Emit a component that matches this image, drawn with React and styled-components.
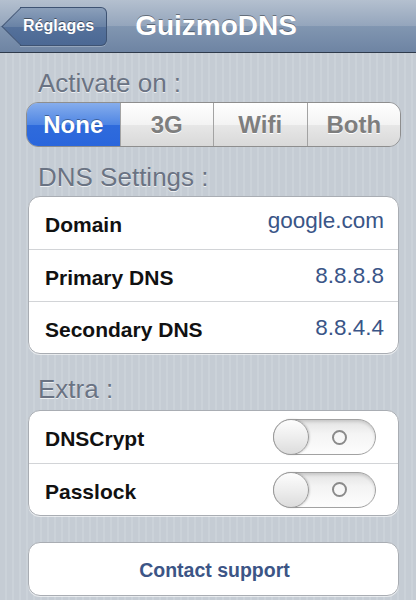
import React from 'react'
import styled, { createGlobalStyle } from 'styled-components'

const Global = createGlobalStyle`
  html, body {
    margin: 0;
    padding: 0;
  }
  body {
    font-family: 'Liberation Sans', Arial, Helvetica, sans-serif;
    background: repeating-linear-gradient(90deg, #c5ccd4 0px, #c5ccd4 5px, #cbd2d9 5px, #cbd2d9 7px);
    min-height: 600px;
  }
`

const Screen = styled.div`
  width: 416px;
  min-height: 600px;
`

const NavBar = styled.div`
  height: 52px;
  border-bottom: 1px solid #2f3b4c;
  background: linear-gradient(#b4c0cf 0%, #94a5bc 50%, #8196b1 51%, #6e84a3 100%);
  display: flex;
  align-items: center;
  padding-left: 7px;
  box-sizing: content-box;
`

const BackButton = styled.div`
  position: relative;
  height: 37px;
  margin-left: 13px;
  padding: 0 12px 0 3px;
  display: flex;
  align-items: center;
  border: 1px solid #3e5373;
  border-left: none;
  border-radius: 0 6px 6px 0;
  background: linear-gradient(#8b9fba 0%, #6a83a6 50%, #55719b 51%, #4b6894 100%);
  box-shadow: 0 1px 0 rgba(255, 255, 255, 0.25);
  color: #fff;
  font-weight: bold;
  font-size: 16px;
  text-shadow: 0 -1px 0 rgba(0, 0, 0, 0.45);
  z-index: 0;

  &::before {
    content: '';
    position: absolute;
    left: -13px;
    top: 5.5px;
    width: 26px;
    height: 26px;
    transform: rotate(45deg);
    border-left: 1px solid #3e5373;
    border-bottom: 1px solid #3e5373;
    background: linear-gradient(135deg, #8b9fba 0%, #6a83a6 50%, #55719b 51%, #4b6894 100%);
    z-index: -1;
  }

  span {
    position: relative;
  }
`

const Title = styled.h1`
  margin: 0 0 0 28px;
  font-size: 28px;
  font-weight: bold;
  color: #fff;
  text-shadow: 0 -1px 0 rgba(0, 0, 0, 0.4);
`

const Content = styled.div`
  padding: 15px 17px 0 28px;
`

const SectionLabel = styled.div`
  margin: ${p => p.$top || 0}px 0 0 10px;
  font-size: 26px;
  line-height: 30px;
  color: #6a7383;
  text-shadow: 0 1px 0 rgba(255, 255, 255, 0.7);
`

const Segmented = styled.div`
  margin: 4px -2px 0 -2px;
  height: 45px;
  display: flex;
  border: 1px solid #8e8e8e;
  border-radius: 12px;
  overflow: hidden;
  box-sizing: border-box;
`

const Segment = styled.div`
  flex: 1;
  display: flex;
  align-items: center;
  justify-content: center;
  font-size: 24px;
  font-weight: bold;
  border-left: ${p => (p.$first ? 'none' : '1px solid #a3a3a3')};
  color: ${p => (p.$active ? '#fff' : '#7e7e7e')};
  text-shadow: ${p => (p.$active ? '0 -1px 0 rgba(0,0,0,0.35)' : '0 1px 0 #fff')};
  background: ${p =>
    p.$active
      ? 'linear-gradient(#86adec 0%, #4f86e4 50%, #2f6bdc 51%, #2a66dc 100%)'
      : 'linear-gradient(#ffffff 0%, #f3f3f3 50%, #e7e7e7 51%, #d9d9d9 100%)'};
`

const Card = styled.div`
  margin-top: ${p => p.$top || 4}px;
  background: #fff;
  border: 1px solid #a9adb3;
  border-radius: 12px;
  box-shadow: 0 1px 0 rgba(255, 255, 255, 0.6);
  overflow: hidden;
`

const Row = styled.div`
  height: 52px;
  box-sizing: border-box;
  display: flex;
  align-items: center;
  justify-content: ${p => (p.$center ? 'center' : 'space-between')};
  padding: 0 ${p => p.$right || 14}px 0 16px;
  border-top: ${p => (p.$first ? 'none' : '1px solid #d2d4d7')};
`

const RowLabel = styled.span`
  font-size: 21px;
  font-weight: bold;
  color: #111;
  margin-top: 4px;
`

const RowValue = styled.span`
  font-size: 22.5px;
  color: #3a5587;
  margin-top: ${p => (p.$up ? -4 : 0)}px;
`

const ActionText = styled.span`
  font-size: 19.5px;
  font-weight: bold;
  color: #3c5586;
  margin-top: 2px;
`

const Switch = styled.div`
  position: relative;
  width: 103px;
  height: 36px;
  box-sizing: border-box;
  border: 1px solid #a2a2a2;
  border-radius: 18px;
  background: linear-gradient(#e3e3e3 0%, #f4f4f4 40%, #fdfdfd 100%);
  box-shadow: inset 0 2px 3px rgba(0, 0, 0, 0.12);
  display: flex;
  align-items: center;
`

const Knob = styled.div`
  position: absolute;
  left: -1px;
  top: -1px;
  width: 36px;
  height: 36px;
  box-sizing: border-box;
  border-radius: 50%;
  border: 1px solid #9a9a9a;
  background: linear-gradient(#fdfdfd 0%, #ececec 55%, #dcdcdc 100%);
  box-shadow: 1px 0 2px rgba(0, 0, 0, 0.15);
`

const OffMark = styled.div`
  margin-left: 58px;
  width: 15px;
  height: 15px;
  box-sizing: border-box;
  border-radius: 50%;
  border: 2px solid #8a8a8a;
  background: #f7f7f7;
`

const Toggle = () => (
  <Switch>
    <Knob />
    <OffMark />
  </Switch>
)

const segments = ['None', '3G', 'Wifi', 'Both']

const dns = [
  { label: 'Domain', value: 'google.com', up: true },
  { label: 'Primary DNS', value: '8.8.8.8' },
  { label: 'Secondary DNS', value: '8.8.4.4' },
]

export default function App() {
  return (
    <Screen>
      <Global />
      <NavBar>
        <BackButton>
          <span>Réglages</span>
        </BackButton>
        <Title>GuizmoDNS</Title>
      </NavBar>

      <Content>
        <SectionLabel>Activate on :</SectionLabel>
        <Segmented>
          {segments.map((s, i) => (
            <Segment key={s} $first={i === 0} $active={i === 0}>
              {s}
            </Segment>
          ))}
        </Segmented>

        <SectionLabel $top={15}>DNS Settings :</SectionLabel>
        <Card>
          {dns.map((d, i) => (
            <Row key={d.label} $first={i === 0}>
              <RowLabel>{d.label}</RowLabel>
              <RowValue $up={d.up}>{d.value}</RowValue>
            </Row>
          ))}
        </Card>

        <SectionLabel $top={20}>Extra :</SectionLabel>
        <Card $top={6}>
          <Row $first $right={22}>
            <RowLabel>DNSCrypt</RowLabel>
            <Toggle />
          </Row>
          <Row $right={22}>
            <RowLabel>Passlock</RowLabel>
            <Toggle />
          </Row>
        </Card>

        <Card $top={26}>
          <Row $first $center>
            <ActionText>Contact support</ActionText>
          </Row>
        </Card>
      </Content>
    </Screen>
  )
}
